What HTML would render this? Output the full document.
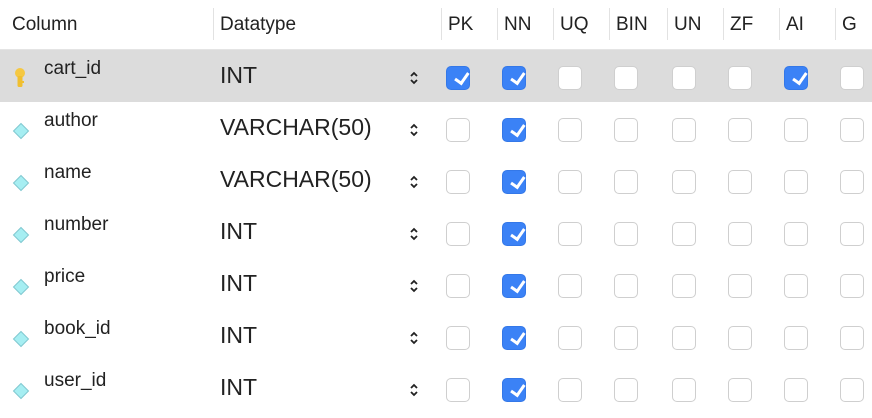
<!DOCTYPE html>
<html><head><meta charset="utf-8"><style>
*{margin:0;padding:0;box-sizing:border-box}
body{width:872px;height:418px;background:#fff;position:relative;overflow:hidden;font-family:"Liberation Sans",Arial,sans-serif;color:#222}
.h{position:absolute;top:14px;font-size:19px;line-height:22px;color:#222}
.sep{position:absolute;top:8px;width:1px;height:32px;background:#e2e2e2}
.r{position:absolute;left:0;width:872px;height:52px}
.r.sel{background:#dcdcdc}
.n{position:absolute;left:44px;top:8px;font-size:19px;line-height:22px}
.t{position:absolute;left:220px;top:12px;font-size:23px;line-height:26px}
.a{position:absolute;left:408px;top:18px;width:12px;height:20px}
.cb{position:absolute;top:16px;width:24px;height:24px;border-radius:5px;background:#fff;border:1px solid #cfcfcf}
.cb.c{background:#3b82f6;border-color:#3478e8}
.cb.c::after{content:"";position:absolute;left:6px;top:3px;width:11px;height:6px;border-left:3px solid #fff;border-bottom:3px solid #fff;transform:rotate(-55deg) translate(-1px,3px);transform-origin:center}
.ic{position:absolute;left:12px;top:20px}
</style></head><body>
<div class="h" style="left:12px">Column</div>
<div class="sep" style="left:213px"></div>
<div class="h" style="left:220px">Datatype</div>
<div class="sep" style="left:441px"></div><div class="h" style="left:448px">PK</div>
<div class="sep" style="left:497px"></div><div class="h" style="left:504px">NN</div>
<div class="sep" style="left:553px"></div><div class="h" style="left:560px">UQ</div>
<div class="sep" style="left:609px"></div><div class="h" style="left:616px">BIN</div>
<div class="sep" style="left:667px"></div><div class="h" style="left:674px">UN</div>
<div class="sep" style="left:723px"></div><div class="h" style="left:730px">ZF</div>
<div class="sep" style="left:779px"></div><div class="h" style="left:786px">AI</div>
<div class="sep" style="left:835px"></div><div class="h" style="left:842px">G</div>
<div style="position:absolute;left:0;top:49px;width:872px;height:1px;background:#e4e4e4"></div>

<div class="r sel" style="top:50px">
<svg class="ic" style="top:17px;left:14px" width="12" height="22" viewBox="0 0 12 22"><circle cx="6" cy="6" r="5" fill="#f5c842"/><rect x="3.5" y="9" width="5" height="11" rx="1.5" fill="#f0bf30"/><rect x="7" y="14" width="3" height="2" fill="#f0bf30"/></svg>
<div class="n">cart_id</div><div class="t">INT</div>
<svg class="a" viewBox="0 0 12 20"><path d="M3 8 L6 5 L9 8 M3 12 L6 15 L9 12" stroke="#222" stroke-width="1.8" fill="none"/></svg>
<div class="cb c" style="left:446px"></div><div class="cb c" style="left:502px"></div><div class="cb" style="left:558px"></div><div class="cb" style="left:614px"></div><div class="cb" style="left:672px"></div><div class="cb" style="left:728px"></div><div class="cb c" style="left:784px"></div><div class="cb" style="left:840px"></div>
</div>

<div class="r" style="top:102px">
<svg class="ic" width="18" height="18" viewBox="0 0 18 18"><path d="M9 1.5 L16.5 9 L9 16.5 L1.5 9Z" fill="#a6eef2" stroke="#80c8d0"/></svg>
<div class="n">author</div><div class="t">VARCHAR(50)</div>
<svg class="a" viewBox="0 0 12 20"><path d="M3 8 L6 5 L9 8 M3 12 L6 15 L9 12" stroke="#222" stroke-width="1.8" fill="none"/></svg>
<div class="cb" style="left:446px"></div><div class="cb c" style="left:502px"></div><div class="cb" style="left:558px"></div><div class="cb" style="left:614px"></div><div class="cb" style="left:672px"></div><div class="cb" style="left:728px"></div><div class="cb" style="left:784px"></div><div class="cb" style="left:840px"></div>
</div>
<div class="r" style="top:154px">
<svg class="ic" width="18" height="18" viewBox="0 0 18 18"><path d="M9 1.5 L16.5 9 L9 16.5 L1.5 9Z" fill="#a6eef2" stroke="#80c8d0"/></svg>
<div class="n">name</div><div class="t">VARCHAR(50)</div>
<svg class="a" viewBox="0 0 12 20"><path d="M3 8 L6 5 L9 8 M3 12 L6 15 L9 12" stroke="#222" stroke-width="1.8" fill="none"/></svg>
<div class="cb" style="left:446px"></div><div class="cb c" style="left:502px"></div><div class="cb" style="left:558px"></div><div class="cb" style="left:614px"></div><div class="cb" style="left:672px"></div><div class="cb" style="left:728px"></div><div class="cb" style="left:784px"></div><div class="cb" style="left:840px"></div>
</div>
<div class="r" style="top:206px">
<svg class="ic" width="18" height="18" viewBox="0 0 18 18"><path d="M9 1.5 L16.5 9 L9 16.5 L1.5 9Z" fill="#a6eef2" stroke="#80c8d0"/></svg>
<div class="n">number</div><div class="t">INT</div>
<svg class="a" viewBox="0 0 12 20"><path d="M3 8 L6 5 L9 8 M3 12 L6 15 L9 12" stroke="#222" stroke-width="1.8" fill="none"/></svg>
<div class="cb" style="left:446px"></div><div class="cb c" style="left:502px"></div><div class="cb" style="left:558px"></div><div class="cb" style="left:614px"></div><div class="cb" style="left:672px"></div><div class="cb" style="left:728px"></div><div class="cb" style="left:784px"></div><div class="cb" style="left:840px"></div>
</div>
<div class="r" style="top:258px">
<svg class="ic" width="18" height="18" viewBox="0 0 18 18"><path d="M9 1.5 L16.5 9 L9 16.5 L1.5 9Z" fill="#a6eef2" stroke="#80c8d0"/></svg>
<div class="n">price</div><div class="t">INT</div>
<svg class="a" viewBox="0 0 12 20"><path d="M3 8 L6 5 L9 8 M3 12 L6 15 L9 12" stroke="#222" stroke-width="1.8" fill="none"/></svg>
<div class="cb" style="left:446px"></div><div class="cb c" style="left:502px"></div><div class="cb" style="left:558px"></div><div class="cb" style="left:614px"></div><div class="cb" style="left:672px"></div><div class="cb" style="left:728px"></div><div class="cb" style="left:784px"></div><div class="cb" style="left:840px"></div>
</div>
<div class="r" style="top:310px">
<svg class="ic" width="18" height="18" viewBox="0 0 18 18"><path d="M9 1.5 L16.5 9 L9 16.5 L1.5 9Z" fill="#a6eef2" stroke="#80c8d0"/></svg>
<div class="n">book_id</div><div class="t">INT</div>
<svg class="a" viewBox="0 0 12 20"><path d="M3 8 L6 5 L9 8 M3 12 L6 15 L9 12" stroke="#222" stroke-width="1.8" fill="none"/></svg>
<div class="cb" style="left:446px"></div><div class="cb c" style="left:502px"></div><div class="cb" style="left:558px"></div><div class="cb" style="left:614px"></div><div class="cb" style="left:672px"></div><div class="cb" style="left:728px"></div><div class="cb" style="left:784px"></div><div class="cb" style="left:840px"></div>
</div>
<div class="r" style="top:362px">
<svg class="ic" width="18" height="18" viewBox="0 0 18 18"><path d="M9 1.5 L16.5 9 L9 16.5 L1.5 9Z" fill="#a6eef2" stroke="#80c8d0"/></svg>
<div class="n">user_id</div><div class="t">INT</div>
<svg class="a" viewBox="0 0 12 20"><path d="M3 8 L6 5 L9 8 M3 12 L6 15 L9 12" stroke="#222" stroke-width="1.8" fill="none"/></svg>
<div class="cb" style="left:446px"></div><div class="cb c" style="left:502px"></div><div class="cb" style="left:558px"></div><div class="cb" style="left:614px"></div><div class="cb" style="left:672px"></div><div class="cb" style="left:728px"></div><div class="cb" style="left:784px"></div><div class="cb" style="left:840px"></div>
</div>
</body></html>
